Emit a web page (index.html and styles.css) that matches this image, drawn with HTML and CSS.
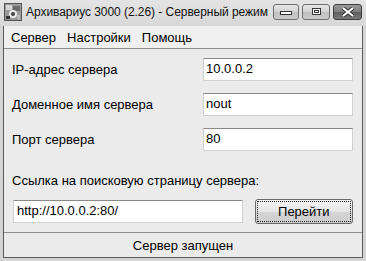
FILE: index.html
```html
<!DOCTYPE html>
<html>
<head>
<meta charset="utf-8">
<link rel="stylesheet" href="styles.css">
</head>
<body>
<div class="window">
  <div class="titlebar">
    <svg class="appicon" width="18" height="18" viewBox="0 0 18 18">
      <rect x="0.5" y="0.5" width="17" height="17" fill="#9a9a9a" stroke="#555"/>
      <rect x="2" y="2" width="6" height="5" fill="#d8d8d8"/>
      <rect x="9" y="3" width="7" height="5" fill="#6a6a6a"/>
      <circle cx="9" cy="11" r="4" fill="#e8e8e8"/>
      <circle cx="9" cy="11" r="2" fill="#444"/>
      <rect x="2" y="13" width="4" height="3" fill="#333"/>
      <rect x="13" y="12" width="3" height="4" fill="#bbb"/>
    </svg>
    <span class="title">Архивариус 3000 (2.26) - Серверный режим</span>
    <div class="capbtns">
      <div class="capbtn"><span class="minglyph"></span></div>
      <div class="capbtn max"><span class="maxglyph"></span></div>
      <div class="capbtn close">
        <svg width="14" height="10" viewBox="0 0 14 10"><path d="M2 1 L12 9 M12 1 L2 9" stroke="#333" stroke-width="4"/><path d="M2 1 L12 9 M12 1 L2 9" stroke="#fff" stroke-width="2.2"/></svg>
      </div>
    </div>
  </div>
  <div class="client">
    <div class="menubar">
      <span class="menuitem">Сервер</span>
      <span class="menuitem">Настройки</span>
      <span class="menuitem">Помощь</span>
    </div>
    <div class="form">
      <div class="row">
        <span class="label">IP-адрес сервера</span>
        <div class="input">10.0.0.2</div>
      </div>
      <div class="row">
        <span class="label">Доменное имя сервера</span>
        <div class="input">nout</div>
      </div>
      <div class="row">
        <span class="label">Порт сервера</span>
        <div class="input">80</div>
      </div>
      <div class="linklabel">Ссылка на поисковую страницу сервера:</div>
      <div class="linkrow">
        <div class="input url">http://10.0.0.2:80/</div>
        <div class="button"><span class="focus">Перейти</span></div>
      </div>
    </div>
    <div class="status">Сервер запущен</div>
  </div>
</div>
</body>
</html>
```
FILE: styles.css
```css
html, body {
  margin: 0;
  padding: 0;
  width: 366px;
  height: 261px;
  overflow: hidden;
  background: #d4d4d4;
  font-family: "Liberation Sans", Arial, sans-serif;
  font-size: 13px;
  color: #000;
}
.window {
  width: 366px;
  height: 261px;
  box-sizing: border-box;
  padding: 0 3px 3px 3px;
  background: linear-gradient(#e4e4e4, #d6d6d6 30px, #d4d4d4);
  display: flex;
  flex-direction: column;
}
.titlebar {
  height: 26px;
  flex: none;
  display: flex;
  align-items: center;
}
.appicon {
  margin-left: 1px;
  margin-top: -2px;
  flex: none;
}
.title {
  margin-left: 4px;
  font-size: 12px;
  letter-spacing: -0.05px;
  color: #111;
  white-space: nowrap;
  margin-top: -2px;
  flex: none;
}
.capbtns {
  margin-left: auto;
  display: flex;
  gap: 3px;
  margin-top: -3px;
  flex: none;
  margin-right: 1px;
}
.capbtn {
  width: 24px;
  height: 14px;
  border: 1px solid #6e6e6e;
  border-radius: 3px;
  background: linear-gradient(#e6e6e6, #d2d2d2 50%, #c0c0c0 51%, #cacaca);
  display: flex;
  align-items: center;
  justify-content: center;
}
.capbtn.max {
  width: 26px;
}
.capbtn.close {
  width: 27px;
  background: linear-gradient(#9a9a9a, #7c7c7c 50%, #5e5e5e 51%, #7a7a7a);
  border-color: #3c3c3c;
}
.minglyph {
  width: 10px;
  height: 2px;
  border: 1px solid #333;
  background: #fff;
  margin-top: 3px;
}
.maxglyph {
  width: 7px;
  height: 5px;
  border: 1px solid #333;
  box-shadow: inset 0 0 0 1px #fff, inset 0 0 0 2px #333;
  background: #fff;
}
.client {
  flex: 1;
  display: flex;
  flex-direction: column;
  border: 1px solid #5a5a5a;
  border-top: none;
  background: #ebebeb;
}
.menubar {
  height: 21px;
  flex: none;
  border-bottom: 1px solid #8e8e8e;
  background: #f0f0f0;
  display: flex;
  align-items: center;
  gap: 11px;
  padding-left: 7px;
  padding-top: 1px;
}
.menuitem {
  white-space: nowrap;
}
.form {
  flex: 1;
  padding: 9px 9px 0 8px;
  display: flex;
  flex-direction: column;
}
.row {
  display: flex;
  align-items: center;
  height: 23px;
  margin-bottom: 12px;
}
.label {
  flex: 1;
  padding-bottom: 1px;
}
.input {
  width: 147px;
  height: 21px;
  border: 1px solid #cfcfcf;
  border-top-color: #8a8a8a;
  background: #fff;
  line-height: 20px;
  padding-left: 2px;
  box-sizing: content-box;
  white-space: nowrap;
}
.row .input {
  width: 146px;
}
.linklabel {
  margin-top: 10px;
  line-height: 16px;
  height: 16px;
  margin-bottom: 10px;
}
.linkrow {
  display: flex;
  align-items: center;
  gap: 12px;
  margin-left: 1px;
}
.input.url {
  width: 226px;
  padding-left: 3px;
}
.button {
  width: 95px;
  height: 21px;
  border: 1px solid #6a6a6a;
  border-radius: 3px;
  background: linear-gradient(#f4f4f4, #e6e6e6 50%, #d6d6d6 51%, #cdcdcd);
  display: flex;
  padding: 1px;
  box-sizing: content-box;
}
.focus {
  flex: 1;
  border: 1px dotted #222;
  display: flex;
  align-items: center;
  justify-content: center;
  padding-bottom: 1px;
}
.status {
  height: 23px;
  flex: none;
  border-top: 1px solid #8e8e8e;
  display: flex;
  align-items: center;
  justify-content: center;
  padding-top: 1px;
}
```
